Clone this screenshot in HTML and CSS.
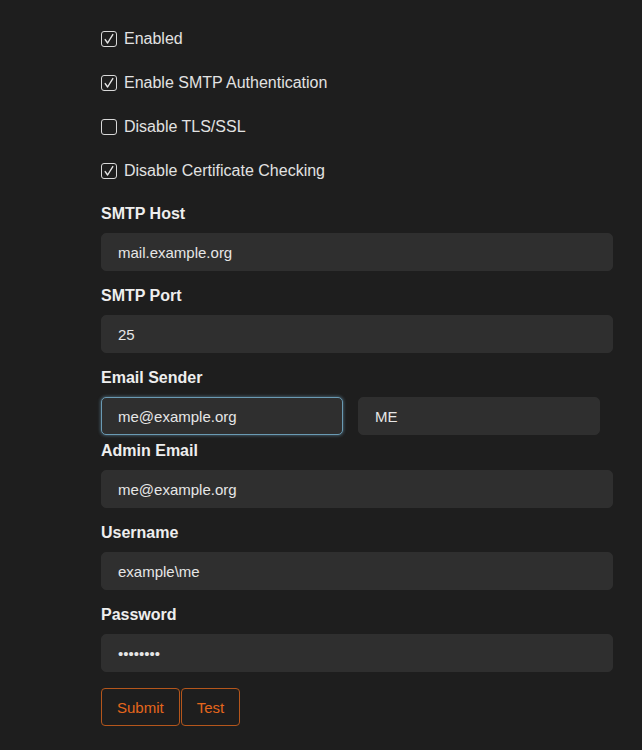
FILE: index.html
```html
<!DOCTYPE html>
<html>
<head>
    <link rel="stylesheet" href="styles.css">
</head>
<body>
<div class="form">
  <div class="checks">
    <label class="check">
      <span class="box"><svg width="12" height="12" viewBox="0 0 12 12"><polyline points="2.2,6.6 4.6,10 9.8,1.6" fill="none" stroke="#e6e6e6" stroke-width="1.4" stroke-linecap="round" stroke-linejoin="round"/></svg></span>
      Enabled
    </label>
    <label class="check">
      <span class="box"><svg width="12" height="12" viewBox="0 0 12 12"><polyline points="2.2,6.6 4.6,10 9.8,1.6" fill="none" stroke="#e6e6e6" stroke-width="1.4" stroke-linecap="round" stroke-linejoin="round"/></svg></span>
      Enable SMTP Authentication
    </label>
    <label class="check">
      <span class="box"></span>
      Disable TLS/SSL
    </label>
    <label class="check">
      <span class="box"><svg width="12" height="12" viewBox="0 0 12 12"><polyline points="2.2,6.6 4.6,10 9.8,1.6" fill="none" stroke="#e6e6e6" stroke-width="1.4" stroke-linecap="round" stroke-linejoin="round"/></svg></span>
      Disable Certificate Checking
    </label>
  </div>

  <div class="field">
    <div class="label">SMTP Host</div>
    <input class="input" type="text" value="mail.example.org">
  </div>
  <div class="field">
    <div class="label">SMTP Port</div>
    <input class="input" type="text" value="25">
  </div>
  <div class="field field-tight">
    <div class="label">Email Sender</div>
    <div class="pair">
      <input class="input input-half focused" type="text" value="me@example.org">
      <input class="input input-half" type="text" value="ME">
    </div>
  </div>
  <div class="field">
    <div class="label">Admin Email</div>
    <input class="input" type="text" value="me@example.org">
  </div>
  <div class="field">
    <div class="label">Username</div>
    <input class="input" type="text" value="example\me">
  </div>
  <div class="field">
    <div class="label">Password</div>
    <input class="input" type="password" value="password">
  </div>

  <div class="buttons">
    <button class="btn">Submit</button>
    <button class="btn">Test</button>
  </div>
</div>
</body>
</html>
```

FILE: styles.css
```css
body {
  margin: 0;
  background-color: #1e1e1e;
  font-family: "Liberation Sans", Arial, sans-serif;
  color: #e6e6e6;
}

.form {
  width: 512px;
  margin-left: 101px;
  padding-top: 17px;
}

.checks {
  margin-bottom: 12px;
}

.check {
  display: flex;
  align-items: center;
  height: 44px;
  font-size: 16px;
  color: #e2e2e2;
}

.box {
  width: 14px;
  height: 14px;
  border: 1.5px solid #d8d8d8;
  border-radius: 3px;
  margin-right: 7px;
  display: flex;
  align-items: center;
  justify-content: center;
}

.field {
  margin-bottom: 16px;
}

.field-tight {
  margin-bottom: 7px;
}

.label {
  font-size: 16px;
  font-weight: bold;
  line-height: 18px;
  margin-bottom: 10px;
  color: #eeeeee;
}

.input {
  display: block;
  box-sizing: border-box;
  width: 512px;
  height: 38px;
  padding: 0 16px;
  background-color: #2f2f2f;
  border: 1px solid #2f2f2f;
  border-radius: 5px;
  color: #e6e6e6;
  font-family: "Liberation Sans", Arial, sans-serif;
  font-size: 15px;
  outline: none;
}

.pair {
  display: flex;
  gap: 15px;
}

.input-half {
  width: 242px;
}

.focused {
  border: 1px solid #6a9ab3;
  box-shadow: 0 0 3px 1px rgba(106, 154, 179, 0.45);
}

.buttons {
  display: flex;
  gap: 1px;
}

.btn {
  height: 38px;
  padding: 0 15px;
  background-color: transparent;
  border: 1px solid #b4561c;
  border-radius: 4px;
  color: #e5661c;
  font-family: "Liberation Sans", Arial, sans-serif;
  font-size: 15px;
}
```
